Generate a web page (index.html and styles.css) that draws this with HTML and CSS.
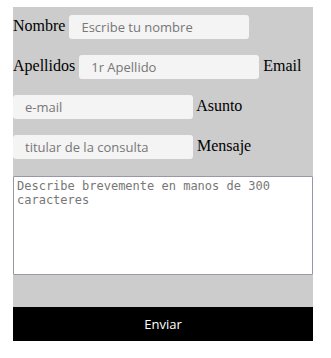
FILE: index.html
```html
<!DOCTYPE html>
<html lang="es">

<head>
    <meta charset="UTF-8">
    <meta name="viewport" content="width=device-width, initial-scale=1.0">
    <title>Contacto</title>
    <link rel="stylesheet" href="styles.css">
</head>

<body>
    <form class="contacto">
        <label for="nombre">Nombre</label>
        <input type="text" id="nombre" placeholder="Escribe tu nombre">
        <label for="apellidos">Apellidos</label>
        <input type="text" id="apellidos" placeholder="1r Apellido">
        <label for="email">Email</label>
        <input type="email" id="email" placeholder="e-mail">
        <label for="asunto">Asunto</label>
        <input type="text" id="asunto" placeholder="titular de la consulta">
        <label for="mensaje">Mensaje</label>
        <textarea id="mensaje" placeholder="Describe brevemente en manos de 300 caracteres"></textarea>
    </form>
    <button class="enviar" type="submit">Enviar</button>
</body>

</html>
```

FILE: styles.css
```css
body {
    margin: 0;
    font-family: "Liberation Serif", serif;
    font-size: 16px;
    color: #000;
}

.contacto {
    width: 300px;
    margin: 7px 13px 0;
    padding-bottom: 32px;
    background-color: #cccccc;
}

.contacto input {
    display: inline-block;
    box-sizing: border-box;
    width: 180px;
    height: 24px;
    margin: 8px 0;
    padding: 0 12px;
    border: none;
    border-radius: 3px;
    background-color: #f4f4f4;
    font-family: "Open Sans", sans-serif;
    font-size: 13px;
    color: #333;
    vertical-align: middle;
}

.contacto input::placeholder {
    color: #777;
}

.contacto textarea {
    display: block;
    box-sizing: border-box;
    width: 300px;
    height: 99px;
    margin: 9px 0 0;
    padding: 2px 3px;
    border: 1px solid #9a96a8;
    border-radius: 1px;
    background: #fff;
    font-family: "DejaVu Sans Mono", monospace;
    font-size: 12px;
    resize: none;
}

.contacto textarea::placeholder {
    color: #777;
}

.enviar {
    display: block;
    width: 300px;
    height: 34px;
    margin: 0 13px;
    border: none;
    background-color: #000;
    color: #fff;
    font-family: "Open Sans", sans-serif;
    font-size: 13px;
    cursor: pointer;
}
```
